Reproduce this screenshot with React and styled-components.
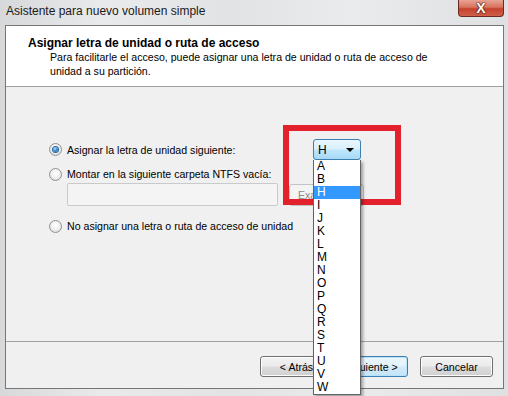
import React from "react";
import styled, { createGlobalStyle } from "styled-components";

const GlobalStyle = createGlobalStyle`
  html, body {
    margin: 0;
    padding: 0;
  }
  body {
    width: 508px;
    height: 396px;
    overflow: hidden;
    background: #dcdee0;
    font-family: "Liberation Sans", Arial, sans-serif;
  }
`;

const Frame = styled.div`
  width: 508px;
  height: 396px;
  box-sizing: border-box;
  padding: 0 4px 7px 5px;
  display: flex;
  flex-direction: column;
  background: linear-gradient(90deg, #d6d8da 0%, #e9eaeb 20%, #e2e3e4 45%, #eaebec 70%, #dfe0e1 100%);
  overflow: hidden;
`;

const TitleBar = styled.div`
  height: 25px;
  display: flex;
  align-items: flex-start;
  flex-shrink: 0;
`;

const Title = styled.span`
  margin: 4px 0 0 1px;
  font-size: 12px;
  line-height: 14px;
  color: #1a1a1a;
`;

const CloseButton = styled.div`
  margin-left: auto;
  width: 46px;
  height: 17px;
  box-sizing: border-box;
  border: 1px solid #6b2a22;
  border-top: none;
  border-radius: 0 0 4px 4px;
  background: linear-gradient(#e8a493 0%, #d7735f 45%, #c5412c 55%, #d0604a 100%);
  display: flex;
  align-items: center;
  justify-content: center;
  color: #fff;
  font-size: 14px;
  font-weight: bold;
  line-height: 1;
  text-shadow: 0 0 2px #4a140e, 0 0 1px #4a140e, 0 0 1px #4a140e;
`;

const Client = styled.div`
  flex: 1;
  display: flex;
  flex-direction: column;
  border: 1px solid #767676;
  background: #f0f0f0;
`;

const Header = styled.div`
  height: 50px;
  flex-shrink: 0;
  background: #fff;
  border-bottom: 1px solid #a0a0a0;
  padding: 10px 0 0 22px;
`;

const Heading = styled.div`
  font-size: 12px;
  font-weight: bold;
  line-height: 14px;
  color: #000;
`;

const Description = styled.div`
  margin-left: 22px;
  width: 400px;
  font-size: 10.6px;
  line-height: 14px;
  color: #000;
`;

const Body = styled.div`
  flex: 1;
  position: relative;
  padding: 52px 0 0 43px;
  display: flex;
  flex-direction: column;
`;

const ChoiceRow = styled.div`
  display: flex;
  align-items: center;
  height: ${(p) => p.h || 14}px;
  margin-top: ${(p) => p.gap || 0}px;
`;

const Label = styled.label`
  display: flex;
  align-items: center;
  gap: 5px;
  width: ${(p) => (p.w ? `${p.w}px` : "auto")};
  font-size: 10.6px;
  color: #000;
`;

const Radio = styled.span`
  width: 11px;
  height: 11px;
  border-radius: 50%;
  border: 1px solid #8f9193;
  background: radial-gradient(circle at 50% 40%, #ffffff 0%, #f1f1f1 45%, #d4d5d6 100%);
  display: flex;
  align-items: center;
  justify-content: center;
  flex-shrink: 0;
`;

const RadioDot = styled.span`
  width: 5px;
  height: 5px;
  border-radius: 50%;
  background: radial-gradient(circle at 40% 35%, #b9e3ff 0%, #3c93d8 45%, #124f86 100%);
  box-shadow: 0 0 0 1px #2e6b9e;
`;

const Combo = styled.div`
  width: 48px;
  height: 21px;
  box-sizing: border-box;
  border: 1px solid #3c7fb1;
  border-radius: 3px;
  background: linear-gradient(#eaf6fd 0%, #d9f0fc 48%, #bee6fd 52%, #a7d9f5 100%);
  display: flex;
  align-items: center;
  padding: 0 6px 0 4px;
  font-size: 12px;
  color: #000;
`;

const Caret = styled.span`
  margin-left: auto;
  width: 0;
  height: 0;
  border-left: 4px solid transparent;
  border-right: 4px solid transparent;
  border-top: 4px solid #000;
`;

const PathRow = styled.div`
  display: flex;
  align-items: center;
  gap: 11px;
  margin: 2px 0 0 18px;
`;

const PathInput = styled.div`
  width: 211px;
  height: 23px;
  box-sizing: border-box;
  border: 1px solid #c9cacb;
  border-radius: 2px;
  background: #f4f4f4;
`;

const BrowseButton = styled.div`
  width: 75px;
  height: 22px;
  box-sizing: border-box;
  border: 1px solid #c1c3c5;
  border-radius: 3px;
  background: #f4f4f4;
  font-size: 10.6px;
  color: #8a8a8a;
  display: flex;
  align-items: center;
  padding-left: 8px;
`;

const Highlight = styled.div`
  position: absolute;
  left: 277px;
  top: 38px;
  width: 118px;
  height: 80px;
  box-sizing: border-box;
  border: 6px solid #e3212c;
  z-index: 1;
`;

const DropList = styled.div`
  position: absolute;
  left: 307px;
  top: 73px;
  width: 48px;
  box-sizing: border-box;
  border: 1px solid #646464;
  border-top: none;
  background: #fff;
  box-shadow: 2px 2px 3px rgba(0, 0, 0, 0.35);
  z-index: 2;
`;

const DropItem = styled.div`
  height: 13px;
  line-height: 13px;
  padding-left: 3px;
  font-size: 12px;
  color: ${(p) => (p.selected ? "#fff" : "#000")};
  background: ${(p) => (p.selected ? "#3399ff" : "transparent")};
`;

const Footer = styled.div`
  height: 32px;
  flex-shrink: 0;
  border-top: 1px solid #a0a0a0;
  display: flex;
  justify-content: flex-end;
  align-items: flex-start;
  padding: 14px 10px 0 0;
`;

const Button = styled.div`
  width: ${(p) => p.w || 73}px;
  height: 21px;
  box-sizing: border-box;
  margin-left: ${(p) => p.gap || 0}px;
  border: 1px solid ${(p) => (p.primary ? "#3c7fb1" : "#707070")};
  border-radius: 3px;
  background: ${(p) =>
    p.primary
      ? "linear-gradient(#eaf6fd 0%, #e2f2fb 48%, #d1ebf9 52%, #c4e4f6 100%)"
      : "linear-gradient(#f2f2f2 0%, #ebebeb 48%, #dddddd 52%, #cfcfcf 100%)"};
  box-shadow: inset 0 0 0 1px ${(p) => (p.primary ? "#b8e2f8" : "#fcfcfc")};
  display: flex;
  align-items: center;
  justify-content: center;
  font-size: 10.6px;
  color: #000;
`;

const letters = ["A", "B", "H", "I", "J", "K", "L", "M", "N", "O", "P", "Q", "R", "S", "T", "U", "V", "W"];

export default function App() {
  return (
    <>
      <GlobalStyle />
      <Frame>
        <TitleBar>
          <Title>Asistente para nuevo volumen simple</Title>
          <CloseButton>X</CloseButton>
        </TitleBar>
        <Client>
          <Header>
            <Heading>Asignar letra de unidad o ruta de acceso</Heading>
            <Description>
              Para facilitarle el acceso, puede asignar una letra de unidad o ruta de acceso de unidad a su partición.
            </Description>
          </Header>
          <Body>
            <ChoiceRow h={21}>
              <Label w={264}>
                <Radio>
                  <RadioDot />
                </Radio>
                Asignar la letra de unidad siguiente:
              </Label>
              <Combo>
                H
                <Caret />
              </Combo>
            </ChoiceRow>
            <ChoiceRow gap={7}>
              <Label>
                <Radio />
                Montar en la siguiente carpeta NTFS vacía:
              </Label>
            </ChoiceRow>
            <PathRow>
              <PathInput />
              <BrowseButton>Exa</BrowseButton>
            </PathRow>
            <ChoiceRow gap={13}>
              <Label>
                <Radio />
                No asignar una letra o ruta de acceso de unidad
              </Label>
            </ChoiceRow>
            <Highlight />
            <DropList>
              {letters.map((l) => (
                <DropItem key={l} selected={l === "H"}>
                  {l}
                </DropItem>
              ))}
            </DropList>
          </Body>
          <Footer>
            <Button>&lt; Atrás</Button>
            <Button primary w={74} gap={1}>
              Siguiente &gt;
            </Button>
            <Button gap={12}>Cancelar</Button>
          </Footer>
        </Client>
      </Frame>
    </>
  );
}
